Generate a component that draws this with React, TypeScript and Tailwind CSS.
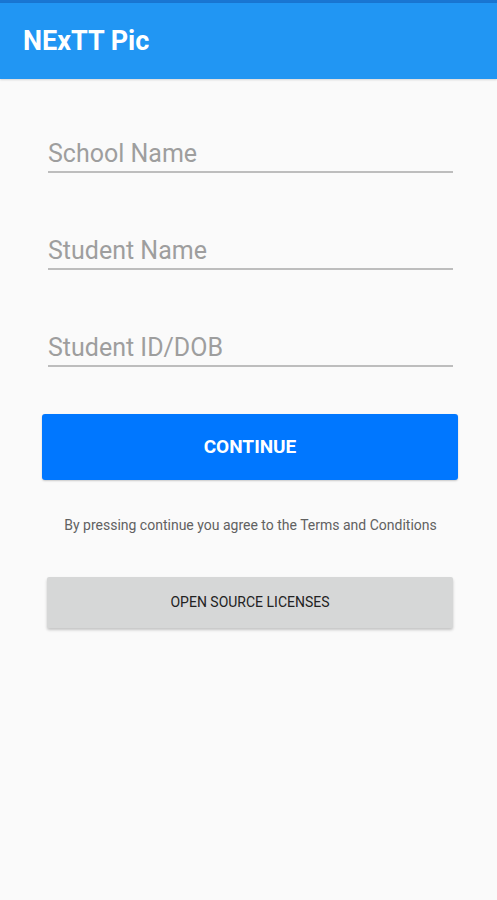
import React from "react";

function Field({ label }: { label: string }) {
  return (
    <div className="flex flex-col">
      <div className="h-[34px] flex items-end pb-[3px] text-[25px] leading-none text-[#9e9e9e]">{label}</div>
      <div className="h-[2px] mt-[2px] bg-[#bdbdbd]" />
    </div>
  );
}

export default function App() {
  return (
    <div className="w-[497px] h-[900px] bg-[#fafafa] flex flex-col" style={{ fontFamily: "Roboto, 'Liberation Sans', sans-serif" }}>
      <div className="h-[3px] bg-[#1976d2]" />
      <div className="h-[76px] bg-[#2196f3] flex items-center pl-[23px] shadow-[0_1px_2px_rgba(0,0,0,0.15)]">
        <span className="text-white font-bold text-[27px] leading-none">NExTT Pic</span>
      </div>
      <div className="flex flex-col px-[48px] pt-[56px] gap-[59px] pr-[44px]">
        <Field label="School Name" />
        <Field label="Student Name" />
        <Field label="Student ID/DOB" />
      </div>
      <div className="pl-[42px] pr-[39px] mt-[47px]">
        <button className="w-full h-[66px] rounded-[3px] bg-[#0077ff] text-white font-bold text-[19px] shadow-[0_1px_2px_rgba(0,0,0,0.2)]">
          CONTINUE
        </button>
      </div>
      <div className="mt-[35px] text-center text-[14px] leading-[20px] text-[#616161] pl-[4px]">
        By pressing continue you agree to the Terms and Conditions
      </div>
      <div className="px-[47px] pr-[44px] mt-[42px]">
        <button className="w-full h-[51px] rounded-[2px] bg-[#d6d7d7] text-[#222] text-[14px] shadow-[0_2px_3px_rgba(0,0,0,0.22)]">
          OPEN SOURCE LICENSES
        </button>
      </div>
    </div>
  );
}
